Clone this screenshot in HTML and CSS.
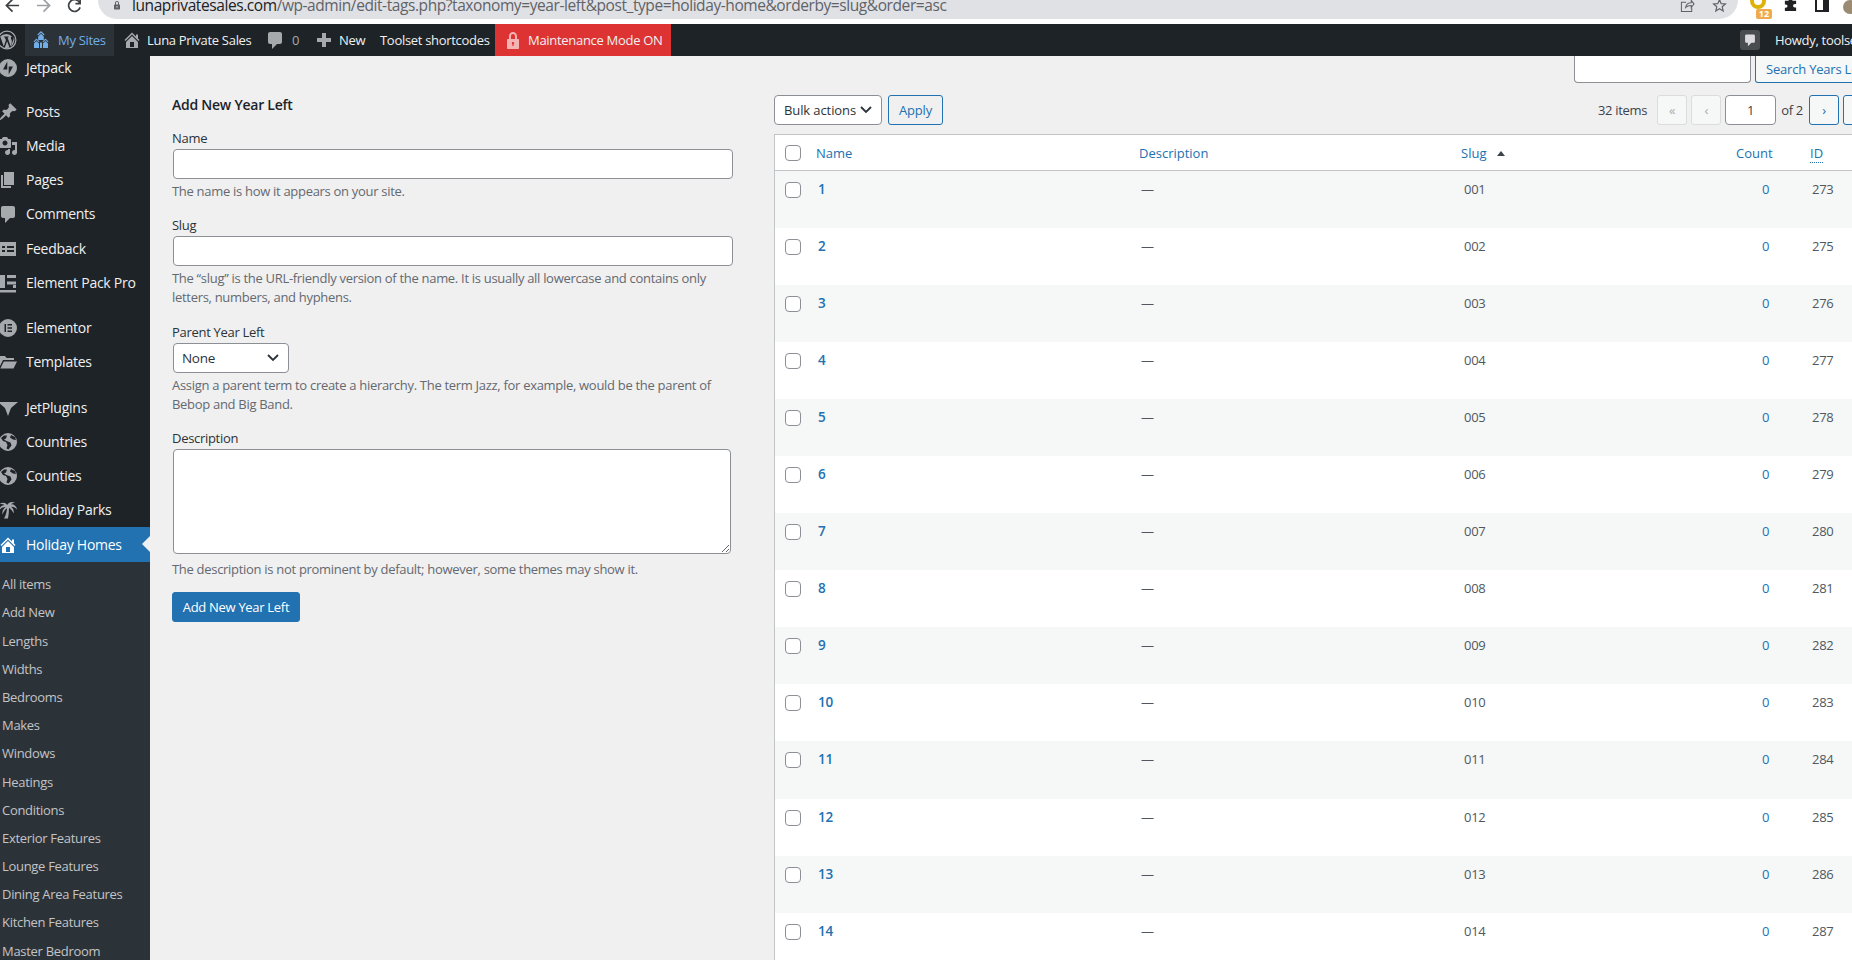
FILE: index.html
```html
<!DOCTYPE html>
<html lang="en">
<head>
<meta charset="utf-8">
<title>Year Left</title>
<link rel="stylesheet" href="styles.css">
</head>
<body>
<svg class="defs" width="0" height="0" aria-hidden="true">
  <symbol id="i-home" viewBox="0 0 20 20"><path d="M16 8.500l1.530 1.530-1.060 1.060L10 4.620l-6.470 6.470-1.060-1.060L10 2.500l4 4v-2h2v4zm-6-2.460l6 5.990V18H4v-5.970zM12 17v-5H8v5h4z"/></symbol>
  <symbol id="i-sites" viewBox="0 0 20 20"><path d="M10 1l3.600 3.600-.8.800L10 2.700 7.200 5.400l-.8-.8zM10 3.800l2.800 2.800V10H7.200V6.600zM5.500 8.500l3 3-.7.700L5.500 10l-2.300 2.200-.7-.7zM5.500 11l2.500 2.500V18H3v-4.500zM14.500 8.500l3 3-.7.700-2.300-2.200-2.300 2.200-.7-.7zM14.500 11l2.500 2.500V18h-5v-4.500zM10 12l1 1v5H9v-5z"/></symbol>
  <symbol id="i-comment" viewBox="0 0 20 20"><path d="M5 2h10c1.100 0 2 .9 2 2v8c0 1.100-.9 2-2 2h-3l-5 5v-5H5c-1.100 0-2-.9-2-2V4c0-1.100.9-2 2-2z"/></symbol>
  <symbol id="i-plus" viewBox="0 0 20 20"><path d="M17 8v4h-5v5H8v-5H3V8h5V3h4v5z"/></symbol>
  <symbol id="i-lock" viewBox="0 0 20 20"><path d="M14 9h1c.6 0 1 .4 1 1v8c0 .6-.4 1-1 1H5c-.6 0-1-.4-1-1v-8c0-.6.4-1 1-1h1V6c0-2.200 1.800-4 4-4s4 1.800 4 4zm-2 0V6c0-1.100-.9-2-2-2s-2 .9-2 2v3zm-2 3c-.7 0-1.200.5-1.200 1.200 0 .4.200.8.600 1V16h1.200v-1.800c.4-.2.600-.6.600-1 0-.7-.5-1.200-1.200-1.200z"/></symbol>
  <symbol id="i-wp" viewBox="0 0 20 20"><path fill-rule="evenodd" d="M10 .5a9.500 9.500 0 1 1 0 19 9.500 9.500 0 0 1 0-19zm0 1.200a8.300 8.300 0 1 0 0 16.600 8.300 8.300 0 0 0 0-16.600zM3.200 6.600l3.600 9.900 2.100-6.200-1-2.900-.9-.1v-.8h4.600v.8l-1 .1 3 8.900.9-2.900c.6-1.900.4-3-.3-4.200-.4-.7-.6-1.500 0-2.100.3-.3.6-.4 1-.4a8 8 0 0 0-12-.1h4zM17 7c.8 2.800.2 5.500-1.800 8.600l-1.300.9 2.300-6.300c.4-1.100.6-2 .6-2.800zM10.100 11.300l-2.300 6.400a8 8 0 0 0 4.700-.1z"/></symbol>
  <symbol id="i-jetpack" viewBox="0 0 20 20"><path fill-rule="evenodd" d="M10 1a9 9 0 1 1 0 18 9 9 0 0 1 0-18zM9.300 3.500L5 11.500h4.300zM10.700 8.500v8l4.300-8z"/></symbol>
  <symbol id="i-pin" viewBox="0 0 20 20"><path d="M10.440 3.020l1.820-1.820 6.360 6.350-1.830 1.820c-1.050-.68-2.480-.57-3.410.36l-.75.75c-.92.93-1.040 2.350-.35 3.410l-1.830 1.820-2.410-2.410-2.800 2.790c-.42.42-3.380 2.710-3.800 2.290s1.860-3.390 2.280-3.810l2.790-2.790L4.100 9.360l1.830-1.820c1.050.69 2.480.57 3.400-.36l.75-.75c.93-.92 1.050-2.350.36-3.410z"/></symbol>
  <symbol id="i-media" viewBox="0 0 20 20"><path d="M13 11V4c0-.55-.45-1-1-1h-1.670L9 1H5L3.670 3H2c-.55 0-1 .45-1 1v7c0 .55.45 1 1 1h10c.55 0 1-.45 1-1zM7 4.500c1.380 0 2.500 1.120 2.500 2.500S8.380 9.500 7 9.500 4.500 8.380 4.500 7 5.620 4.500 7 4.500zM14 6h5v10.500c0 1.380-1.120 2.500-2.500 2.500S14 17.880 14 16.500s1.120-2.500 2.500-2.500c.17 0 .34.020.5.050V9h-3V6zm-4 8.050V13h2v3.500c0 1.380-1.120 2.500-2.500 2.500S7 17.880 7 16.500 8.120 14 9.500 14c.17 0 .34.020.5.050z"/></symbol>
  <symbol id="i-pages" viewBox="0 0 20 20"><path d="M6 15V2h10v13H6zm-1 1h8v2H3V5h2v11z"/></symbol>
  <symbol id="i-feedback" viewBox="0 0 20 20"><path fill-rule="evenodd" d="M2 3h16v14H2zM4 7v2h3V7zm5 0v2h7V7zm-5 4v2h3v-2zm5 0v2h7v-2z"/></symbol>
  <symbol id="i-epack" viewBox="0 0 20 20"><path d="M2 2h5v13H2zM9 2h9v3H9zM9 8.500h9v3H9zM2 17h16v2.500H2zM15 12h3v3h-3z"/></symbol>
  <symbol id="i-elementor" viewBox="0 0 20 20"><path fill-rule="evenodd" d="M10 1a9 9 0 1 1 0 18 9 9 0 0 1 0-18zM6.500 6v8H8V6zm3 0v1.500H14V6zm0 3.200v1.600H14V9.200zm0 3.300V14H14v-1.500z"/></symbol>
  <symbol id="i-folder" viewBox="0 0 20 20"><path d="M1 4h6l1.500 2H16v2H5L1.500 15H1zM5.800 9.500H19l-3.500 7H2.300z"/></symbol>
  <symbol id="i-funnel" viewBox="0 0 20 20"><path d="M0 4h20l-7 6-3 8-3-8z"/></symbol>
  <symbol id="i-globe" viewBox="0 0 20 20"><path fill-rule="evenodd" d="M10 1a9 9 0 1 1 0 18 9 9 0 0 1 0-18zM6 3.500L3 6l2 3 3 1 1.500 3-1 3.500 2 1 3-4-1-3-4-1.500L6 7.500l2-1 1-3zM13 3l-1 2.500 3 2 3 .5-1-3z"/></symbol>
  <symbol id="i-palm" viewBox="0 0 20 20"><path d="M10 6.500C9 2.500 4 1.500 1 4.500c2-.7 4-.5 5.500.5C4 5 1.500 7 1 10.500c2-2.500 4-3.500 6.500-3.500-2.500 2-3.500 4.500-3 7.500 1-3 2.700-5 4.500-6.300-.2 3.800-1.200 7.300-3 10.300h4c.7-3.500 1-7 1-10.500 2 1 3.700 3 4.500 5.500.7-2.800-.3-5.200-2.500-6.800 2.500-.2 4.800.8 6 3-.3-3.400-3-5.400-6-5.400 1-1 2.500-1.500 4-1.300-2.700-2-6.700-1.400-8 2.500z"/></symbol>
  <symbol id="i-share" viewBox="0 0 16 16"><path d="M1.500 4.500h5M1.500 4v10.500h11V10M6 10c.5-3 3-5 6-5V2.500L15 6.500l-3 3.500V8c-2.500 0-4.500.5-6 2z" fill="none" stroke="currentColor" stroke-width="1.100"/></symbol>
  <symbol id="i-star" viewBox="0 0 16 16"><path d="M8 1.800l1.800 4.200 4.500.4-3.400 3 1 4.400L8 11.500l-3.900 2.300 1-4.400-3.400-3 4.500-.4z" fill="none" stroke="currentColor" stroke-width="1.300"/></symbol>
  <symbol id="i-puzzle" viewBox="0 0 16 16"><path d="M6 2.500a2 2 0 0 1 4 0V4h4v3.500h-1.500a1.800 1.800 0 0 0 0 3.600H14V15H2v-3.500h1a1.800 1.800 0 0 0 0-3.600H2V4h4z"/></symbol>
</svg>

<div class="browser">
  <div class="nav">
    <svg class="nav-btn dark" viewBox="0 0 16 16"><path d="M15 8H2M8 1.500L1.500 8 8 14.500" fill="none" stroke="currentColor" stroke-width="1.800"/></svg>
    <svg class="nav-btn light" viewBox="0 0 16 16"><path d="M1 8h13M8 1.500L14.500 8 8 14.500" fill="none" stroke="currentColor" stroke-width="1.800"/></svg>
    <svg class="nav-btn dark reload" viewBox="0 0 16 16"><path d="M13.500 5A6.300 6.300 0 1 0 14 10M14 1v5H9" fill="none" stroke="currentColor" stroke-width="1.800"/></svg>
  </div>
  <div class="urlbar">
    <svg class="url-lock" viewBox="0 0 20 20"><use href="#i-lock"/></svg>
    <div class="url-text"><span class="host">lunaprivatesales.com</span>/wp-admin/edit-tags.php?taxonomy=year-left&amp;post_type=holiday-home&amp;orderby=slug&amp;order=asc</div>
    <div class="url-actions">
      <svg class="tool" viewBox="0 0 16 16"><use href="#i-share"/></svg>
      <svg class="tool" viewBox="0 0 16 16"><use href="#i-star"/></svg>
    </div>
  </div>
  <div class="ext">
    <div class="ext-honey"><span class="ext-ring"></span><span class="ext-badge">12</span></div>
    <svg class="ext-puzzle" viewBox="0 0 16 16"><use href="#i-puzzle"/></svg>
    <div class="ext-side"></div>
    <div class="ext-avatar"></div>
  </div>
</div>

<header class="adminbar">
  <div class="ab-item ab-wp"><svg class="ab-icon wp" viewBox="0 0 20 20"><use href="#i-wp"/></svg></div>
  <div class="ab-item ab-sites"><svg class="ab-icon" viewBox="0 0 20 20"><use href="#i-sites"/></svg><span>My Sites</span></div>
  <div class="ab-item ab-site"><svg class="ab-icon" viewBox="0 0 20 20"><use href="#i-home"/></svg><span>Luna Private Sales</span></div>
  <div class="ab-item ab-comments"><svg class="ab-icon" viewBox="0 0 20 20"><use href="#i-comment"/></svg><span class="ab-count">0</span></div>
  <div class="ab-item ab-new"><svg class="ab-icon" viewBox="0 0 20 20"><use href="#i-plus"/></svg><span>New</span></div>
  <div class="ab-item ab-toolset"><span>Toolset shortcodes</span></div>
  <div class="ab-item ab-maint"><svg class="ab-icon" viewBox="0 0 20 20"><use href="#i-lock"/></svg><span>Maintenance Mode ON</span></div>
  <div class="ab-right">
    <div class="ab-notify"><svg class="ab-icon" viewBox="0 0 20 20"><use href="#i-comment"/></svg></div>
    <span class="ab-howdy">Howdy, toolset</span>
  </div>
</header>

<div class="wrap">
  <nav class="sidebar">
    <ul class="menu">
      <li class="mi"><svg class="mi-icon" viewBox="0 0 20 20"><use href="#i-jetpack"/></svg>Jetpack</li>
      <li class="mi sep first"><svg class="mi-icon" viewBox="0 0 20 20"><use href="#i-pin"/></svg>Posts</li>
      <li class="mi"><svg class="mi-icon" viewBox="0 0 20 20"><use href="#i-media"/></svg>Media</li>
      <li class="mi"><svg class="mi-icon" viewBox="0 0 20 20"><use href="#i-pages"/></svg>Pages</li>
      <li class="mi"><svg class="mi-icon" viewBox="0 0 20 20"><use href="#i-comment"/></svg>Comments</li>
      <li class="mi"><svg class="mi-icon" viewBox="0 0 20 20"><use href="#i-feedback"/></svg>Feedback</li>
      <li class="mi"><svg class="mi-icon" viewBox="0 0 20 20"><use href="#i-epack"/></svg>Element Pack Pro</li>
      <li class="mi sep"><svg class="mi-icon" viewBox="0 0 20 20"><use href="#i-elementor"/></svg>Elementor</li>
      <li class="mi"><svg class="mi-icon" viewBox="0 0 20 20"><use href="#i-folder"/></svg>Templates</li>
      <li class="mi sep"><svg class="mi-icon" viewBox="0 0 20 20"><use href="#i-funnel"/></svg>JetPlugins</li>
      <li class="mi"><svg class="mi-icon" viewBox="0 0 20 20"><use href="#i-globe"/></svg>Countries</li>
      <li class="mi"><svg class="mi-icon" viewBox="0 0 20 20"><use href="#i-globe"/></svg>Counties</li>
      <li class="mi"><svg class="mi-icon" viewBox="0 0 20 20"><use href="#i-palm"/></svg>Holiday Parks</li>
      <li class="mi current"><svg class="mi-icon" viewBox="0 0 20 20"><use href="#i-home"/></svg>Holiday Homes</li>
    </ul>
    <ul class="submenu">
      <li>All items</li>
      <li>Add New</li>
      <li>Lengths</li>
      <li>Widths</li>
      <li>Bedrooms</li>
      <li>Makes</li>
      <li>Windows</li>
      <li>Heatings</li>
      <li>Conditions</li>
      <li>Exterior Features</li>
      <li>Lounge Features</li>
      <li>Dining Area Features</li>
      <li>Kitchen Features</li>
      <li>Master Bedroom</li>
    </ul>
  </nav>

  <main class="content">
    <section class="col-form">
      <h2 class="form-title">Add New Year Left</h2>
      <div class="field tight">
        <label class="lbl">Name</label>
        <input class="txt" type="text">
        <p class="help">The name is how it appears on your site.</p>
      </div>
      <div class="field">
        <label class="lbl">Slug</label>
        <input class="txt" type="text">
        <p class="help">The “slug” is the URL-friendly version of the name. It is usually all lowercase and contains only letters, numbers, and hyphens.</p>
      </div>
      <div class="field tight">
        <label class="lbl">Parent Year Left</label>
        <select class="sel sel-parent"><option>None</option></select>
        <p class="help">Assign a parent term to create a hierarchy. The term Jazz, for example, would be the parent of Bebop and Big Band.</p>
      </div>
      <div class="field last">
        <label class="lbl">Description</label>
        <textarea class="area"></textarea>
        <p class="help">The description is not prominent by default; however, some themes may show it.</p>
      </div>
      <button class="primary" type="button">Add New Year Left</button>
    </section>

    <section class="col-table">
      <div class="search">
        <input class="search-input" type="text">
        <button class="btn search-btn" type="button">Search Years Left</button>
      </div>
      <div class="tablenav">
        <select class="sel sel-bulk"><option>Bulk actions</option></select>
        <button class="btn apply" type="button">Apply</button>
        <div class="pages">
          <span class="num">32 items</span>
          <span class="pg off">«</span>
          <span class="pg off">‹</span>
          <input class="pg-input" type="text" value="1">
          <span class="of">of 2</span>
          <span class="pg on">›</span>
          <span class="pg on">»</span>
        </div>
      </div>
      <table class="terms">
        <colgroup>
          <col class="c-cb"><col class="c-name"><col class="c-desc"><col class="c-slug"><col class="c-count"><col class="c-id">
        </colgroup>
        <thead>
          <tr>
            <th><input class="cb" type="checkbox"></th>
            <th class="t-link t-name">Name</th>
            <th class="t-link t-desc">Description</th>
            <th class="t-link">Slug <span class="sort"></span></th>
            <th class="t-link t-count">Count</th>
            <th class="t-link t-id"><span class="abbr">ID</span></th>
          </tr>
        </thead>
        <tbody>
          <tr><td><input class="cb" type="checkbox"></td><td class="name">1</td><td>—</td><td class="slug">001</td><td class="count">0</td><td class="id">273</td></tr>
          <tr><td><input class="cb" type="checkbox"></td><td class="name">2</td><td>—</td><td class="slug">002</td><td class="count">0</td><td class="id">275</td></tr>
          <tr><td><input class="cb" type="checkbox"></td><td class="name">3</td><td>—</td><td class="slug">003</td><td class="count">0</td><td class="id">276</td></tr>
          <tr><td><input class="cb" type="checkbox"></td><td class="name">4</td><td>—</td><td class="slug">004</td><td class="count">0</td><td class="id">277</td></tr>
          <tr><td><input class="cb" type="checkbox"></td><td class="name">5</td><td>—</td><td class="slug">005</td><td class="count">0</td><td class="id">278</td></tr>
          <tr><td><input class="cb" type="checkbox"></td><td class="name">6</td><td>—</td><td class="slug">006</td><td class="count">0</td><td class="id">279</td></tr>
          <tr><td><input class="cb" type="checkbox"></td><td class="name">7</td><td>—</td><td class="slug">007</td><td class="count">0</td><td class="id">280</td></tr>
          <tr><td><input class="cb" type="checkbox"></td><td class="name">8</td><td>—</td><td class="slug">008</td><td class="count">0</td><td class="id">281</td></tr>
          <tr><td><input class="cb" type="checkbox"></td><td class="name">9</td><td>—</td><td class="slug">009</td><td class="count">0</td><td class="id">282</td></tr>
          <tr><td><input class="cb" type="checkbox"></td><td class="name">10</td><td>—</td><td class="slug">010</td><td class="count">0</td><td class="id">283</td></tr>
          <tr><td><input class="cb" type="checkbox"></td><td class="name">11</td><td>—</td><td class="slug">011</td><td class="count">0</td><td class="id">284</td></tr>
          <tr><td><input class="cb" type="checkbox"></td><td class="name">12</td><td>—</td><td class="slug">012</td><td class="count">0</td><td class="id">285</td></tr>
          <tr><td><input class="cb" type="checkbox"></td><td class="name">13</td><td>—</td><td class="slug">013</td><td class="count">0</td><td class="id">286</td></tr>
          <tr><td><input class="cb" type="checkbox"></td><td class="name">14</td><td>—</td><td class="slug">014</td><td class="count">0</td><td class="id">287</td></tr>
        </tbody>
      </table>
    </section>
  </main>
</div>
</body>
</html>
```

FILE: styles.css
```css
* { box-sizing: border-box; }
html, body { margin: 0; height: 960px; overflow: hidden; }
body {
  width: 1852px;
  background: #f0f0f1;
  color: #3c434a;
  font: 13px/20px "Open Sans", "Noto Sans", sans-serif;
  letter-spacing: -0.3px;
  display: flex;
  flex-direction: column;
}
ul { list-style: none; margin: 0; padding: 0; }
.defs { position: absolute; }

/* browser strip */
.browser {
  height: 24px;
  flex: none;
  background: #fff;
  display: flex;
  overflow: hidden;
}
.nav {
  width: 98px;
  flex: none;
  display: flex;
  align-items: flex-start;
  gap: 16px;
  padding-left: 5px;
  margin-top: -2px;
}
.nav-btn { width: 15px; height: 15px; }
.dark { color: #3c4043; }
.light { color: #9aa0a6; }
.urlbar {
  width: 1640px;
  height: 38px;
  flex: none;
  margin-top: -19px;
  padding: 10px 0 0 14px;
  background: #dfe1e5;
  border-radius: 19px;
  display: flex;
  align-items: center;
}
.url-lock { width: 10px; height: 12px; fill: #5f6368; flex: none; }
.url-text {
  margin-left: 10px;
  font-size: 15.500px;
  letter-spacing: -0.42px;
  color: #5f6368;
  white-space: nowrap;
}
.host { color: #202124; }
.url-actions { margin-left: auto; display: flex; gap: 17px; padding-right: 11px; }
.tool { width: 15px; height: 15px; color: #5f6368; }
.ext { flex: 1; display: flex; padding-left: 12px; }
.ext-honey { position: relative; width: 30px; }
.ext-ring {
  position: absolute;
  left: 0;
  top: -7px;
  width: 16px;
  height: 16px;
  border: 4px solid #dcb20b;
  border-radius: 50%;
}
.ext-badge {
  position: absolute;
  left: 6px;
  top: 9px;
  width: 16px;
  height: 10px;
  background: #eeaa4d;
  border-radius: 2px;
  color: #fff;
  font-size: 9px;
  font-weight: 700;
  line-height: 10px;
  letter-spacing: 0;
  text-align: center;
}
.ext-puzzle { width: 15px; height: 15px; margin: -3px 0 0 3px; fill: #202124; }
.ext-side {
  width: 14px;
  height: 12px;
  margin: 0 0 0 17px;
  border: 2px solid #202124;
  border-right-width: 6px;
  border-top: 0;
}
.ext-avatar { width: 14px; height: 14px; margin: 0 0 0 14px; border-radius: 50%; background: #9b8b72; }

/* admin bar */
.adminbar {
  height: 32px;
  flex: none;
  background: #1d2327;
  color: #f0f0f1;
  display: flex;
  align-items: stretch;
  position: relative;
  z-index: 2;
  white-space: nowrap;
}
.ab-item { display: flex; align-items: center; }
.ab-icon { width: 20px; height: 20px; fill: #a7aaad; flex: none; }
.ab-wp { width: 25px; }
.wp { margin-left: -3px; }
.ab-sites { width: 89px; background: #2c3338; color: #72aee6; padding-left: 6px; gap: 7px; }
.ab-sites .ab-icon { fill: #72aee6; }
.ab-site { margin-left: 8px; gap: 5px; width: 143px; }
.ab-comments { gap: 7px; width: 52px; }
.ab-count { color: #a7aaad; }
.ab-new { gap: 5px; width: 65px; margin-left: -3px; }
.ab-toolset { width: 116px; padding-left: 1px; }
.ab-maint { background: #dd3333; width: 176px; padding-left: 8px; gap: 5px; }
.ab-maint .ab-icon { fill: #f4b4b4; }
.ab-right { margin-left: auto; display: flex; align-items: center; }
.ab-notify {
  width: 20px;
  height: 20px;
  background: #4a4d50;
  border-radius: 3px;
  display: flex;
  align-items: center;
  justify-content: center;
  margin-right: 15px;
}
.ab-notify .ab-icon { width: 14px; height: 14px; fill: #dcdcde; }
.ab-howdy { width: 77px; overflow: hidden; }

/* layout */
.wrap { flex: 1; display: flex; min-height: 0; }
.sidebar {
  width: 150px;
  flex: none;
  background: #1d2327;
  color: #f0f0f1;
  overflow: hidden;
  font-size: 14px;
  letter-spacing: -0.25px;
}
.menu { margin-top: -5px; }
.mi {
  height: 34.100px;
  display: flex;
  align-items: center;
  gap: 8px;
  position: relative;
  white-space: nowrap;
}
.mi.sep { margin-top: 11.500px; }
.mi.first { margin-top: 10px; }
.mi-icon { width: 20px; height: 20px; flex: none; fill: #a7aaad; margin-left: -2px; }
.current { background: #2271b1; color: #fff; height: 35px; }
.current .mi-icon { fill: #fff; }
.current::after {
  content: "";
  position: absolute;
  right: 0;
  top: 9px;
  border: 8px solid transparent;
  border-right-color: #f0f0f1;
  border-left-width: 0;
}
.submenu {
  background: #2c3338;
  color: #c3c4c7;
  padding: 8px 0 0 2px;
  font-size: 13px;
  height: 500px;
  letter-spacing: -0.3px;
}
.submenu li { height: 28.200px; line-height: 28px; white-space: nowrap; }

.content { flex: 1; display: flex; min-width: 0; }

/* form */
.col-form { width: 624px; flex: none; padding: 39px 0 0 22px; }
.form-title { margin: 0 0 13px; font-size: 14px; line-height: 20px; font-weight: 600; color: #1d2327; letter-spacing: -0.25px; }
.field { margin-bottom: 15px; }
.field.tight { margin-bottom: 14px; }
.field.last { margin-bottom: 13px; }
.lbl { display: block; line-height: 21px; height: 21px; color: #2c3338; }
.txt {
  display: block;
  width: 560px;
  height: 30px;
  margin-left: 1px;
  background: #fff;
  border: 1px solid #8c8f94;
  border-radius: 4px;
}
.help { margin: 3px 0 0; line-height: 19px; color: #646970; width: 560px; }
.sel {
  display: block;
  appearance: none;
  height: 30px;
  background: #fff url("data:image/svg+xml,%3Csvg xmlns='http://www.w3.org/2000/svg' width='20' height='20'%3E%3Cpath d='M5 7l5 5 5-5' fill='none' stroke='%232c3338' stroke-width='1.800'/%3E%3C/svg%3E") no-repeat right 5px center;
  border: 1px solid #8c8f94;
  border-radius: 4px;
  color: #2c3338;
  font: 13.500px "Open Sans", "Noto Sans", sans-serif;
  letter-spacing: -0.3px;
}
.sel-parent { width: 116px; margin-left: 1px; padding: 0 8px; }
.area {
  display: block;
  width: 558px;
  height: 105px;
  margin: 0 0 6px 1px;
  background: #fff;
  border: 1px solid #8c8f94;
  border-radius: 4px;
}
.primary {
  display: block;
  width: 128px;
  height: 30px;
  padding: 0;
  background: #2271b1;
  border: 1px solid #2271b1;
  border-radius: 3px;
  color: #fff;
  font: 13px "Open Sans", "Noto Sans", sans-serif;
  letter-spacing: -0.3px;
}

/* table column */
.col-table { width: 1100px; flex: none; }
.search { height: 27px; display: flex; gap: 4px; padding-left: 800px; }
.search-input {
  width: 177px;
  height: 27px;
  background: #fff;
  border: 1px solid #8c8f94;
  border-top: 0;
  border-radius: 0 0 4px 4px;
}
.btn {
  background: #f6f7f7;
  border: 1px solid #2271b1;
  border-radius: 3px;
  color: #2271b1;
  font: 13px "Open Sans", "Noto Sans", sans-serif;
  letter-spacing: -0.2px;
  padding: 0;
}
.search-btn {
  width: 120px;
  height: 27px;
  border-top: 0;
  border-radius: 0 0 3px 3px;
  text-align: left;
  padding-left: 10px;
  white-space: nowrap;
  overflow: hidden;
}
.tablenav { display: flex; align-items: center; height: 30px; margin-top: 12px; }
.sel-bulk { width: 108px; padding: 0 0 0 9px; font-size: 13px; letter-spacing: -0.1px; }
.apply { width: 55px; height: 30px; margin-left: 6px; background: #f0f0f1; }
.pages { margin: 0 -3px 0 auto; display: flex; align-items: center; }
.num { margin-right: 10px; }
.pg {
  width: 30px;
  height: 30px;
  display: flex;
  align-items: center;
  justify-content: center;
  border: 1px solid;
  border-radius: 3px;
  margin-right: 4px;
}
.pg.off { border-color: #dcdcde; color: #a7aaad; background: #f6f7f7; }
.pg.on { border-color: #2271b1; color: #2271b1; background: #f6f7f7; }
.pg-input {
  width: 51px;
  height: 30px;
  background: #fff;
  border: 1px solid #8c8f94;
  border-radius: 4px;
  text-align: center;
  color: #3c434a;
  font: 13px "Open Sans", "Noto Sans", sans-serif;
}
.of { margin: 0 6px 0 5px; }

.terms {
  table-layout: fixed;
  width: 1100px;
  margin-top: 9px;
  border-collapse: separate;
  border-spacing: 0;
  border: 1px solid #c3c4c7;
  background: #fff;
}
.c-cb { width: 34px; }
.c-name { width: 324px; }
.c-desc { width: 320px; }
.c-slug { width: 267px; }
.c-count { width: 82px; }
.c-id { width: 72px; }
th {
  height: 36px;
  padding: 0 8px;
  text-align: left;
  font-weight: 400;
  border-bottom: 1px solid #c3c4c7;
}
th:first-child, td:first-child { padding: 0 0 0 10px; }
.t-link { color: #2271b1; letter-spacing: 0; }
.t-name { padding-left: 7px; }
.t-desc { padding-left: 6px; }
.sort {
  display: inline-block;
  vertical-align: 2px;
  margin-left: 7px;
  border: 4px solid transparent;
  border-top: 0;
  border-bottom: 5px solid #3c434a;
}
.t-count { padding: 0 0 0 16px; }
.t-id { padding: 0 0 0 8px; }
.abbr { border-bottom: 1px dotted #2271b1; }
td {
  height: 57.050px;
  padding: 8px;
  vertical-align: top;
  color: #50575e;
  line-height: 20px;
}
tbody tr:nth-child(odd) { background: #f6f7f7; }
td:first-child { padding-top: 11px; }
.name { color: #2271b1; font-weight: 600; font-size: 13.500px; padding-left: 9px; }
.slug { padding-left: 11px; }
.count { color: #2271b1; padding-left: 42px; }
.id { padding-left: 10px; }
.cb {
  appearance: none;
  display: block;
  width: 16px;
  height: 16px;
  margin: 0;
  background: #fff;
  border: 1px solid #8c8f94;
  border-radius: 4px;
}
```
